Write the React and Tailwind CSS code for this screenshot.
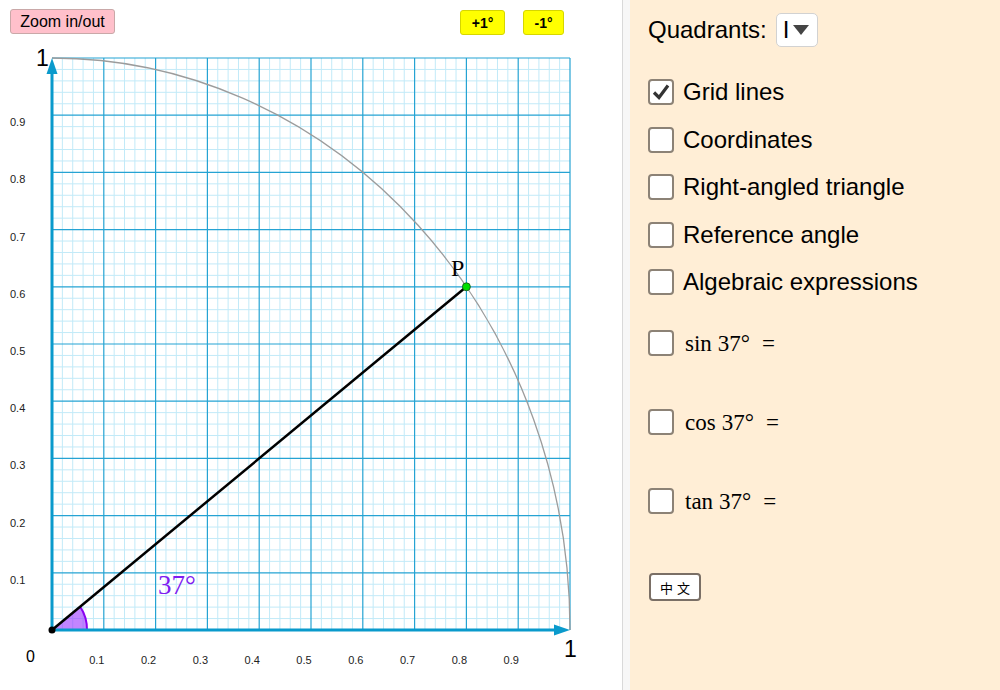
import React from 'react';

const X0 = 52;
const Y0 = 630;
const SX = 518;
const SY = 572;

const px = (x) => X0 + x * SX;
const py = (y) => Y0 - y * SY;

const ticks = [0.1, 0.2, 0.3, 0.4, 0.5, 0.6, 0.7, 0.8, 0.9];

const Graph = () => {
  const minor = [];
  for (let i = 1; i < 50; i++) {
    if (i % 5 === 0) continue;
    minor.push(i / 50);
  }
  const major = [0.1, 0.2, 0.3, 0.4, 0.5, 0.6, 0.7, 0.8, 0.9, 1];

  return (
    <svg width="622" height="690" className="block">
      {minor.map((v) => (
        <g key={'m' + v}>
          <line x1={px(v)} y1={py(0)} x2={px(v)} y2={py(1)} stroke="#c2eaf8" strokeWidth="1" />
          <line x1={px(0)} y1={py(v)} x2={px(1)} y2={py(v)} stroke="#c2eaf8" strokeWidth="1" />
        </g>
      ))}
      {major.map((v) => (
        <g key={'M' + v}>
          <line x1={px(v)} y1={py(0)} x2={px(v)} y2={py(1)} stroke="#25a3d3" strokeWidth="1.2" />
          <line x1={px(0)} y1={py(v)} x2={px(1)} y2={py(v)} stroke="#25a3d3" strokeWidth="1.2" />
        </g>
      ))}

      {/* unit circle (scaled) */}
      <path d={`M ${px(1)} ${py(0)} A ${SX} ${SY} 0 0 0 ${px(0)} ${py(1)}`} fill="none" stroke="#9c9c9c" strokeWidth="1.3" />

      {/* angle sector */}
      <path d={`M ${X0} ${Y0} L ${X0 + 35} ${Y0} A 35 38.6 0 0 0 ${X0 + 28.2} ${Y0 - 23.3} Z`} fill="#9933ff" fillOpacity="0.6" stroke="none" />
      <path d={`M ${X0 + 35} ${Y0} A 35 38.6 0 0 0 ${X0 + 28.2} ${Y0 - 23.3}`} fill="none" stroke="#8a00f0" strokeWidth="2" />

      {/* axes */}
      <line x1={X0} y1={Y0} x2={px(1) - 12} y2={Y0} stroke="#0a9acc" strokeWidth="3" />
      <polygon points={`${px(1)},${Y0} ${px(1) - 16},${Y0 - 5.5} ${px(1) - 16},${Y0 + 5.5}`} fill="#0a9acc" />
      <line x1={X0} y1={Y0} x2={X0} y2={py(1) + 12} stroke="#0a9acc" strokeWidth="3" />
      <polygon points={`${X0},${py(1)} ${X0 - 5.5},${py(1) + 16} ${X0 + 5.5},${py(1) + 16}`} fill="#0a9acc" />

      {/* radius */}
      <line x1={X0} y1={Y0} x2={px(0.8)} y2={py(0.6)} stroke="#000" strokeWidth="2.5" />
      <circle cx={X0} cy={Y0} r="3.5" fill="#000" />
      <circle cx={px(0.8)} cy={py(0.6)} r="4" fill="#00e000" stroke="#1a4d1a" strokeWidth="0.8" />

      <text x="451" y="276" fontFamily="'Liberation Serif', serif" fontSize="24" fill="#000">P</text>
      <text x="158" y="594" fontFamily="'Liberation Serif', serif" fontSize="27" fill="#7f1cf0">37°</text>

      {/* tick labels */}
      {ticks.map((t) => (
        <text key={'y' + t} x="10" y={py(t) + 11} fontFamily="'Liberation Sans', sans-serif" fontSize="11" fill="#222">{t}</text>
      ))}
      {ticks.map((t) => (
        <text key={'x' + t} x={px(t) - 7} y="664" textAnchor="middle" fontFamily="'Liberation Sans', sans-serif" fontSize="11" fill="#222">{t}</text>
      ))}
      <text x="26" y="662" fontFamily="'Liberation Sans', sans-serif" fontSize="16" fill="#000">0</text>
      <text x="36" y="66" fontFamily="'Liberation Sans', sans-serif" fontSize="23" fill="#000">1</text>
      <text x="564" y="657" fontFamily="'Liberation Sans', sans-serif" fontSize="23" fill="#000">1</text>
    </svg>
  );
};

const Check = ({ checked }) => (
  <span className="w-[26px] h-[26px] shrink-0 rounded-[4px] border-2 border-[#8c8276] bg-white flex items-center justify-center">
    {checked && (
      <svg width="20" height="20" viewBox="0 0 20 20">
        <path d="M3 10.5 L8 15.5 L17 3.5" fill="none" stroke="#333" strokeWidth="3.2" strokeLinejoin="miter" />
      </svg>
    )}
  </span>
);

const Row = ({ label, checked }) => (
  <div className="flex items-center gap-[9px] h-[26px]">
    <Check checked={checked} />
    <span className="text-[24px] text-black leading-none">{label}</span>
  </div>
);

const MathRow = ({ fn }) => (
  <div className="flex items-center gap-[11px] h-[26px]">
    <Check />
    <span className="text-[23px] text-black leading-none font-['Liberation_Serif',serif]">
      {fn}<span className="ml-[6px]">37°</span><span className="ml-[12px]">=</span>
    </span>
  </div>
);

export default function App() {
  return (
    <div className="w-[1000px] h-[690px] flex bg-white font-['Liberation_Sans',sans-serif] overflow-hidden">
      <div className="relative w-[622px] h-full bg-white">
        <Graph />
        <button className="absolute left-[10px] top-[9px] w-[105px] h-[25px] rounded-[3px] bg-[#ffc0cb] border border-[#c9a8a8] text-[16px] text-black leading-none">
          Zoom in/out
        </button>
        <button className="absolute left-[460px] top-[10px] w-[45px] h-[25px] rounded-[3px] bg-[#ffff00] border border-[#d6d600] text-[14px] font-bold text-black leading-none">
          +1°
        </button>
        <button className="absolute left-[523px] top-[10px] w-[41px] h-[25px] rounded-[3px] bg-[#ffff00] border border-[#d6d600] text-[14px] font-bold text-black leading-none">
          -1°
        </button>
      </div>
      <div className="w-px h-full bg-[#d9d9d9]" />
      <div className="w-[7px] h-full bg-[#f7f7f7]" />
      <div className="flex-1 h-full bg-[#ffeed6] pl-[18px] pt-[13px]">
        <div className="flex items-center h-[34px]">
          <span className="text-[24px] text-black leading-none">Quadrants:</span>
          <div className="ml-[9px] w-[42px] h-[34px] bg-white border border-[#d2d2d2] rounded-[5px] flex items-center pl-[6px] gap-[4px]">
            <span className="text-[24px] leading-none text-black">I</span>
            <svg width="16" height="10" viewBox="0 0 16 10">
              <polygon points="0,0 16,0 8,10" fill="#444" />
            </svg>
          </div>
        </div>
        <div className="flex flex-col gap-[21.5px] mt-[32px]">
          <Row label="Grid lines" checked />
          <Row label="Coordinates" />
          <Row label="Right-angled triangle" />
          <Row label="Reference angle" />
          <Row label="Algebraic expressions" />
        </div>
        <div className="flex flex-col gap-[53px] mt-[35px]">
          <MathRow fn="sin" />
          <MathRow fn="cos" />
          <MathRow fn="tan" />
        </div>
        <button className="mt-[59px] ml-px w-[52px] h-[28px] bg-white border-2 border-[#7a6f66] rounded-[4px] text-[13px] leading-none text-black font-['Noto_Sans_CJK_SC',sans-serif] tracking-[4px] pl-[4px]">
          中文
        </button>
      </div>
    </div>
  );
}
